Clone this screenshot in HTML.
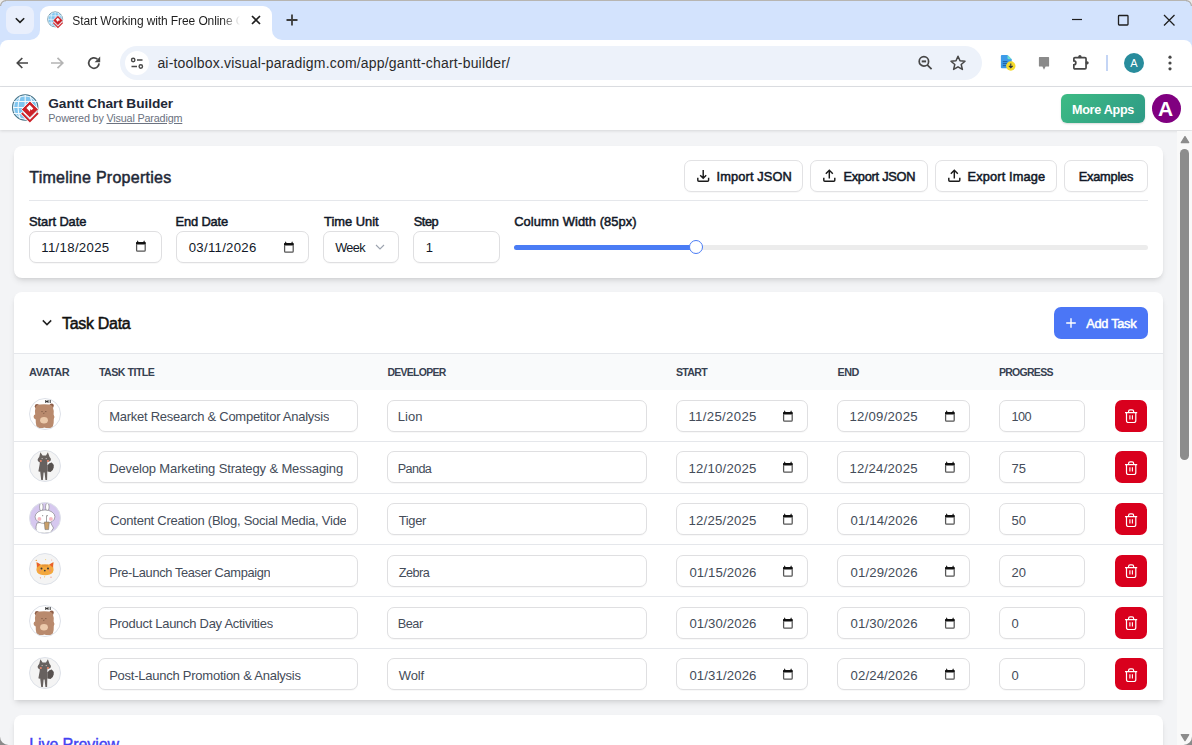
<!DOCTYPE html>
<html><head><meta charset="utf-8">
<style>
*{box-sizing:border-box;margin:0;padding:0}
html,body{width:1192px;height:745px;overflow:hidden}
body{position:relative;background:#f3f4f6;font-family:"Liberation Sans",sans-serif;color:#1f2937}
.abs{position:absolute}
svg{display:block}
/* chrome */
#tabstrip{left:0;top:0;width:1192px;height:48px;background:#d3e3fd}
#topline{left:0;top:0;width:1192px;height:1px;background:#b7b5b1}
#ddbtn{left:6px;top:6px;width:28px;height:28px;border-radius:8px;background:#e9effc}
#tab{left:40px;top:6px;width:232px;height:34px;background:#fff;border-radius:9px 9px 0 0}
.flw{width:10px;height:10px;background:#fff;top:30px}
.flb{width:20px;height:20px;background:#d3e3fd;top:20px}
#toolbar{left:0;top:40px;width:1192px;height:47px;background:#fff;border-radius:8px 8px 0 0;border-bottom:1px solid #dfe1e5}
#omni{left:120px;top:46px;width:862px;height:34px;border-radius:17px;background:#edf2fa}
#siteinfo{left:125px;top:51px;width:24px;height:24px;border-radius:12px;background:#fff}
#url{left:157px;top:54px;font-size:14px;color:#1f1f1f;white-space:nowrap;letter-spacing:0}
#tabtitle{left:72px;top:13px;font-size:11.8px;color:#1f1f1f;white-space:nowrap;width:168px;overflow:hidden;
 -webkit-mask-image:linear-gradient(90deg,#000 150px,transparent 168px)}
/* page header */
#hdr{left:0;top:87px;width:1192px;height:43px;background:#fff;box-shadow:0 1px 3px rgba(0,0,0,.12)}
#scroll{left:1177px;top:131px;width:15px;height:614px;background:#f9f9f9}
.card{background:#fff;border-radius:8px;box-shadow:0 4px 6px -1px rgba(0,0,0,.1),0 2px 4px -2px rgba(0,0,0,.1)}
.lbl{font-size:12.2px;font-weight:700;color:#111827;white-space:nowrap}
.inp{background:#fff;border:1px solid #dfdfe1;border-radius:7px;height:32px;box-shadow:0 1px 1px rgba(0,0,0,.03)}
.itxt{font-size:13px;color:#1f2937;white-space:nowrap}
.btn{background:#fff;border:1px solid #e2e2e4;border-radius:7px;height:32px;box-shadow:0 1px 1px rgba(0,0,0,.03)}
.btxt{font-size:12.2px;font-weight:700;color:#111827;white-space:nowrap}
.th{font-size:10.5px;font-weight:700;color:#374151;white-space:nowrap;top:366px}
.row{left:14px;width:1149px;height:52px;border-bottom:1px solid #e5e7eb}
.rtxt{font-size:12.6px;color:#374151;white-space:nowrap}
.del{background:#d9001d;border-radius:7px;width:32px;height:32px}
</style></head>
<body>
<!-- ================= CHROME ================= -->
<div id="tabstrip" class="abs"></div>
<div id="topline" class="abs"></div>
<div class="abs flw" style="left:30px"></div>
<div class="abs flb" style="left:20px;border-bottom-right-radius:10px"></div>
<div class="abs flw" style="left:272px"></div>
<div class="abs flb" style="left:272px;border-bottom-left-radius:10px"></div>
<div id="ddbtn" class="abs"><svg width="28" height="28"><path d="M9.8 12.2l4.2 4.2 4.2-4.2" fill="none" stroke="#1f1f1f" stroke-width="1.6"/></svg></div>
<div id="tab" class="abs"></div>

<svg class="abs" style="left:250px;top:14px" width="12" height="12"><path d="M2 2l8 8M10 2l-8 8" stroke="#1f1f1f" stroke-width="1.7"/></svg>
<svg class="abs" style="left:285px;top:13px" width="14" height="14"><path d="M7 1.5v11M1.5 7h11" stroke="#3c3c3c" stroke-width="1.8"/></svg>
<!-- window controls -->
<svg class="abs" style="left:1068px;top:12px" width="18" height="16"><path d="M4 7.5h10" stroke="#1f1f1f" stroke-width="1.2"/></svg>
<svg class="abs" style="left:1114px;top:11px" width="18" height="18"><rect x="4.5" y="4.5" width="9.5" height="9.5" rx="0.8" fill="none" stroke="#1f1f1f" stroke-width="1.3"/></svg>
<svg class="abs" style="left:1160px;top:11px" width="18" height="18"><path d="M4 4l10.5 10.5M14.5 4L4 14.5" stroke="#1f1f1f" stroke-width="1.3"/></svg>
<div id="toolbar" class="abs"></div>
<!-- nav -->
<svg class="abs" style="left:14px;top:55px" width="16" height="16"><path d="M14 8H3.5M8.3 3L3.3 8l5 5" fill="none" stroke="#474747" stroke-width="1.7"/></svg>
<svg class="abs" style="left:50px;top:55px" width="16" height="16"><path d="M1 8h11.5M7.5 2.8L12.8 8l-5.3 5.2" fill="none" stroke="#b4b4b4" stroke-width="1.7"/></svg>
<svg class="abs" style="left:86px;top:55px" width="16" height="16"><path d="M13.1 8.4A5.2 5.2 0 1 1 11.4 4.2" fill="none" stroke="#474747" stroke-width="1.7"/><path d="M14.2 1.6V7.2H8.6z" fill="#474747"/></svg>
<div id="omni" class="abs"></div>
<div id="siteinfo" class="abs"><svg width="24" height="24"><circle cx="8.2" cy="9" r="1.7" fill="none" stroke="#474747" stroke-width="1.4"/><path d="M12 9h5.5M6.5 15.5h5.5" stroke="#474747" stroke-width="1.4"/><circle cx="15.8" cy="15.5" r="1.7" fill="none" stroke="#474747" stroke-width="1.4"/></svg></div>
<svg class="abs" style="left:916px;top:54px" width="18" height="18"><circle cx="7.9" cy="7.4" r="4.7" fill="none" stroke="#474747" stroke-width="1.7"/><path d="M5.7 7.4h4.4" stroke="#474747" stroke-width="2"/><path d="M11.2 10.8l4.4 4.4" stroke="#474747" stroke-width="1.7"/></svg>
<svg class="abs" style="left:949px;top:54px" width="18" height="18"><path d="M9 2.2l2 4.6 5 .4-3.8 3.3 1.2 4.9L9 12.8l-4.4 2.6 1.2-4.9L2 7.2l5-.4z" fill="none" stroke="#474747" stroke-width="1.5" stroke-linejoin="round"/></svg>
<svg class="abs" style="left:998px;top:53px" width="20" height="20"><path d="M3.9 2H9.5L13.7 6.2V14.3Q13.7 15.3 12.7 15.3H3.9Q2.9 15.3 2.9 14.3V3Q2.9 2 3.9 2z" fill="#3d9be9"/><path d="M9.5 2L13.7 6.2H10.5Q9.5 6.2 9.5 5.2z" fill="#6ee2cf"/><path d="M4.8 8.6h4.6M4.8 10.6h4.6M4.8 12.6h3.2" stroke="#1e5a9a" stroke-width="0.9"/><circle cx="12.8" cy="13" r="4.7" fill="#f5da2c"/><path d="M12.8 10.4v4.4M10.9 12.8l1.9 2 1.9-2" fill="none" stroke="#2b3440" stroke-width="1.1"/></svg>
<svg class="abs" style="left:1035px;top:54px" width="18" height="18"><path d="M4.5 3.1H13.5Q14.1 3.1 14.1 3.7V11.9Q14.1 12.5 13.5 12.5H10.6L9 15.7 7.4 12.5H4.5Q3.9 12.5 3.9 11.9V3.7Q3.9 3.1 4.5 3.1z" fill="#8a8a8a"/></svg>
<svg class="abs" style="left:1071px;top:53px" width="20" height="20"><path d="M4 4.65H13.9Q15.05 4.65 15.05 5.8V14.7Q15.05 15.85 13.9 15.85H4Q2.85 15.85 2.85 14.7V11.8A2 2 0 0 0 2.85 7.8V5.8Q2.85 4.65 4 4.65Z" fill="none" stroke="#474747" stroke-width="1.7"/><circle cx="8.9" cy="3.6" r="1.6" fill="#474747"/><circle cx="16.1" cy="9.8" r="1.6" fill="#474747"/></svg>
<div class="abs" style="left:1106px;top:55px;width:2px;height:16px;background:#c4d5f5"></div>
<div class="abs" style="left:1124px;top:53px;width:20px;height:20px;border-radius:10px;background:#288c9c;color:#fff;font-size:11px;text-align:center;line-height:20px">A</div>
<svg class="abs" style="left:1162px;top:54px" width="16" height="18"><circle cx="8" cy="3.2" r="1.6" fill="#474747"/><circle cx="8" cy="9" r="1.6" fill="#474747"/><circle cx="8" cy="14.8" r="1.6" fill="#474747"/></svg>

<svg class="abs" style="left:45.2px;top:9px" width="20.7" height="20.7" viewBox="0 0 35 35"><circle cx="17.2" cy="17.5" r="12.7" fill="#7fc5ef" stroke="#4f7585" stroke-width="1.1"/>
<circle cx="17.2" cy="17.5" r="11.6" fill="none" stroke="#f2f9fd" stroke-width="0.9"/>
<path d="M5.5 11.5h23.4M5 17.5h24.4M5.5 23.5h23.4" stroke="#f2f9fd" stroke-width="1.1"/>
<path d="M17.2 5v25M12.3 6.2c-3 6.5-3 16 0 22.6M22.1 6.2c3 6.5 3 16 0 22.6" fill="none" stroke="#f2f9fd" stroke-width="1.1"/>
<path d="M13.2 22.4L21.9 31.1 30.6 22.4" fill="none" stroke="#fff" stroke-width="3.4"/>
<path d="M13.8 23L21.9 31.1 30 23" fill="none" stroke="#cc2229" stroke-width="1.9"/>
<path d="M21.9 11L30.3 19.4 21.9 27.8 13.5 19.4z" fill="#cc2229" stroke="#fff" stroke-width="0.9"/>
<path d="M21.7 14.8L25.3 18.4 23.5 20.2 22.3 19 22 21.8 18.4 18.1z" fill="#fff"/></svg>
<div class="abs tt" style="left:72.30px;top:15px;font-size:12.00px;line-height:12.00px;font-weight:400;color:#1f1f1f;white-space:nowrap;letter-spacing:-0.100px;width:170px;padding-bottom:4px;overflow:hidden;-webkit-mask-image:linear-gradient(90deg,#000 150px,transparent 168px)">Start Working with Free Online Gantt</div>
<div class="abs tt" style="left:157.40px;top:56px;font-size:14.00px;line-height:14.00px;font-weight:400;color:#2a2a2a;white-space:nowrap;letter-spacing:0.187px;">ai-toolbox.visual-paradigm.com/app/gantt-chart-builder/</div>
<svg class="abs" style="left:0;top:0" width="6" height="6"><path d="M0 0H6V0.8A5.2 5.2 0 0 0 0.8 6H0z" fill="#ebebeb"/><path d="M6 0.6A5.4 5.4 0 0 0 0.6 6" fill="none" stroke="#a9a7a3" stroke-width="1.1"/></svg>
<svg class="abs" style="left:1186px;top:0" width="6" height="6"><path d="M6 0H0V0.8A5.2 5.2 0 0 1 5.2 6H6z" fill="#ebebeb"/><path d="M0 0.6A5.4 5.4 0 0 1 5.4 6" fill="none" stroke="#a9a7a3" stroke-width="1.1"/></svg>
<div id="hdr" class="abs"></div>
<svg class="abs" style="left:8px;top:90px" width="35" height="35" viewBox="0 0 35 35"><circle cx="17.2" cy="17.5" r="12.7" fill="#7fc5ef" stroke="#4f7585" stroke-width="1.1"/>
<circle cx="17.2" cy="17.5" r="11.6" fill="none" stroke="#f2f9fd" stroke-width="0.9"/>
<path d="M5.5 11.5h23.4M5 17.5h24.4M5.5 23.5h23.4" stroke="#f2f9fd" stroke-width="1.1"/>
<path d="M17.2 5v25M12.3 6.2c-3 6.5-3 16 0 22.6M22.1 6.2c3 6.5 3 16 0 22.6" fill="none" stroke="#f2f9fd" stroke-width="1.1"/>
<path d="M13.2 22.4L21.9 31.1 30.6 22.4" fill="none" stroke="#fff" stroke-width="3.4"/>
<path d="M13.8 23L21.9 31.1 30 23" fill="none" stroke="#cc2229" stroke-width="1.9"/>
<path d="M21.9 11L30.3 19.4 21.9 27.8 13.5 19.4z" fill="#cc2229" stroke="#fff" stroke-width="0.9"/>
<path d="M21.7 14.8L25.3 18.4 23.5 20.2 22.3 19 22 21.8 18.4 18.1z" fill="#fff"/></svg>
<div class="abs tt" style="left:48.30px;top:97px;font-size:13.70px;line-height:13.70px;font-weight:700;color:#1f2937;white-space:nowrap;letter-spacing:-0.084px;">Gantt Chart Builder</div>
<div class="abs tt" style="left:48.30px;top:113px;font-size:10.80px;line-height:10.80px;font-weight:400;color:#6b7280;white-space:nowrap;letter-spacing:-0.170px;">Powered by <span style="text-decoration:underline">Visual Paradigm</span></div>
<div class="abs" style="left:1061px;top:94px;width:84px;height:29px;border-radius:6px;background:linear-gradient(135deg,#3dbb84,#2e9a86);box-shadow:0 1px 2px rgba(0,0,0,.15)"></div>
<div class="abs tt" style="left:1072.00px;top:104px;font-size:12.60px;line-height:12.60px;font-weight:700;color:#fff;white-space:nowrap;letter-spacing:-0.283px;">More Apps</div>
<div class="abs" style="left:1152px;top:94px;width:29px;height:29px;border-radius:50%;background:#800080"></div>
<div class="abs tt" style="left:1158.00px;top:98px;font-size:21.00px;line-height:21.00px;font-weight:700;color:#fff;white-space:nowrap;">A</div>
<div id="scroll" class="abs"></div>
<svg class="abs" style="left:1177px;top:131px" width="15" height="614">
 <path d="M4.3 11.6h7.4l-3.7-6z" fill="#8c8c8c" stroke="#8c8c8c" stroke-width="1.3" stroke-linejoin="round"/>
 <rect x="3" y="18" width="9" height="311" rx="4.5" fill="#8c8c8c"/>
 <path d="M4.3 603.6h7.4l-3.7 6z" fill="#8c8c8c" stroke="#8c8c8c" stroke-width="1.3" stroke-linejoin="round"/>
</svg>
<div class="abs card" style="left:14px;top:146px;width:1149px;height:132px"></div>
<div class="abs tt" style="left:29.20px;top:170px;font-size:16.00px;line-height:16.00px;font-weight:400;-webkit-text-stroke:0.5px #1f2937;color:#1f2937;white-space:nowrap;letter-spacing:0.265px;">Timeline Properties</div>
<div class="abs" style="left:29px;top:200px;width:1119px;height:1px;background:#e5e7eb"></div>
<div class="abs btn" style="left:684px;top:160px;width:119px"></div>
<svg class="abs" style="left:696px;top:169px" width="14" height="14"><path d="M7.2 1.1V9.3M4.2 6.2L7.2 9.2 10.2 6.2M1.8 8.8V11.2Q1.8 12.2 2.8 12.2H11.6Q12.6 12.2 12.6 11.2V8.8" fill="none" stroke="#1a1a1a" stroke-width="1.45"/></svg>
<div class="abs tt" style="left:716.60px;top:171px;font-size:12.80px;line-height:12.80px;font-weight:400;-webkit-text-stroke:0.5px #111827;color:#111827;white-space:nowrap;letter-spacing:0.129px;">Import JSON</div>
<div class="abs btn" style="left:810px;top:160px;width:118px"></div>
<svg class="abs" style="left:822px;top:169px" width="14" height="14"><path d="M7.3 9.6V1.5M3.8 4.8L7.3 1.3 10.8 4.8M1.8 8.8V11.2Q1.8 12.2 2.8 12.2H11.8Q12.8 12.2 12.8 11.2V8.8" fill="none" stroke="#1a1a1a" stroke-width="1.45"/></svg>
<div class="abs tt" style="left:843.40px;top:171px;font-size:12.80px;line-height:12.80px;font-weight:400;-webkit-text-stroke:0.5px #111827;color:#111827;white-space:nowrap;letter-spacing:-0.253px;">Export JSON</div>
<div class="abs btn" style="left:935px;top:160px;width:122px"></div>
<svg class="abs" style="left:947px;top:169px" width="14" height="14"><path d="M7.3 9.6V1.5M3.8 4.8L7.3 1.3 10.8 4.8M1.8 8.8V11.2Q1.8 12.2 2.8 12.2H11.8Q12.8 12.2 12.8 11.2V8.8" fill="none" stroke="#1a1a1a" stroke-width="1.45"/></svg>
<div class="abs tt" style="left:967.60px;top:171px;font-size:12.80px;line-height:12.80px;font-weight:400;-webkit-text-stroke:0.5px #111827;color:#111827;white-space:nowrap;letter-spacing:0.128px;">Export Image</div>
<div class="abs btn" style="left:1064px;top:160px;width:84px"></div>
<div class="abs tt" style="left:1078.70px;top:171px;font-size:12.80px;line-height:12.80px;font-weight:400;-webkit-text-stroke:0.5px #111827;color:#111827;white-space:nowrap;letter-spacing:-0.227px;">Examples</div>
<div class="abs tt" style="left:29.10px;top:216px;font-size:12.90px;line-height:12.90px;font-weight:400;-webkit-text-stroke:0.5px #111827;color:#111827;white-space:nowrap;letter-spacing:-0.085px;">Start Date</div>
<div class="abs tt" style="left:175.60px;top:216px;font-size:12.90px;line-height:12.90px;font-weight:400;-webkit-text-stroke:0.5px #111827;color:#111827;white-space:nowrap;letter-spacing:-0.168px;">End Date</div>
<div class="abs tt" style="left:324.00px;top:216px;font-size:12.90px;line-height:12.90px;font-weight:400;-webkit-text-stroke:0.5px #111827;color:#111827;white-space:nowrap;letter-spacing:-0.011px;">Time Unit</div>
<div class="abs tt" style="left:413.70px;top:216px;font-size:12.77px;line-height:12.77px;font-weight:400;-webkit-text-stroke:0.5px #111827;color:#111827;white-space:nowrap;letter-spacing:-0.430px;">Step</div>
<div class="abs tt" style="left:514.20px;top:216px;font-size:12.90px;line-height:12.90px;font-weight:400;-webkit-text-stroke:0.5px #111827;color:#111827;white-space:nowrap;letter-spacing:0.073px;">Column Width (85px)</div>
<div class="abs inp" style="left:29px;top:231px;width:133px"></div>
<div class="abs tt" style="left:41.30px;top:241px;font-size:13.20px;line-height:13.20px;font-weight:400;color:#111827;white-space:nowrap;letter-spacing:0.312px;">11/18/2025</div>
<div class="abs" style="left:135.2px;top:240.4px"><svg width="12" height="12"><path d="M1.6 4.5V10.2Q1.6 11.1 2.5 11.1H9.3Q10.2 11.1 10.2 10.2V4.5" fill="none" stroke="#555" stroke-width="1.25"/><path d="M1 4.6V2.6Q1 1.9 1.7 1.9H1.9L2.7 0.3 3.5 1.9H8.3L9.1 0.3 9.9 1.9H10.1Q10.8 1.9 10.8 2.6V4.6z" fill="#111"/></svg></div>
<div class="abs inp" style="left:176px;top:231px;width:133px"></div>
<div class="abs tt" style="left:188.70px;top:241px;font-size:13.20px;line-height:13.20px;font-weight:400;color:#111827;white-space:nowrap;letter-spacing:0.290px;">03/11/2026</div>
<div class="abs" style="left:283px;top:240.6px"><svg width="12" height="12"><path d="M1.6 4.5V10.2Q1.6 11.1 2.5 11.1H9.3Q10.2 11.1 10.2 10.2V4.5" fill="none" stroke="#555" stroke-width="1.25"/><path d="M1 4.6V2.6Q1 1.9 1.7 1.9H1.9L2.7 0.3 3.5 1.9H8.3L9.1 0.3 9.9 1.9H10.1Q10.8 1.9 10.8 2.6V4.6z" fill="#111"/></svg></div>
<div class="abs inp" style="left:323px;top:231px;width:76px"></div>
<div class="abs tt" style="left:335.20px;top:242px;font-size:12.72px;line-height:12.72px;font-weight:400;color:#111827;white-space:nowrap;letter-spacing:-0.661px;">Week</div>
<svg class="abs" style="left:375px;top:243px" width="10" height="8"><path d="M1 2l4 4 4-4" fill="none" stroke="#9ca3af" stroke-width="1.1"/></svg>
<div class="abs inp" style="left:413px;top:231px;width:87px"></div>
<div class="abs tt" style="left:425.80px;top:241px;font-size:13.00px;line-height:13.00px;font-weight:400;color:#111827;white-space:nowrap;">1</div>
<div class="abs" style="left:514px;top:245px;width:634px;height:5px;border-radius:3px;background:#ececec"></div>
<div class="abs" style="left:514px;top:245px;width:182px;height:5px;border-radius:3px;background:#4a7cf5"></div>
<div class="abs" style="left:688.7px;top:240.4px;width:14px;height:14px;border-radius:50%;background:#fff;border:1.5px solid #4a7cf5"></div>
<div class="abs card" style="left:14px;top:292px;width:1149px;height:408px;border-radius:8px 8px 0 0"></div>
<svg class="abs" style="left:40px;top:317px" width="14" height="12"><path d="M2.8 3.4l4.2 4.2 4.2-4.2" fill="none" stroke="#222" stroke-width="1.5"/></svg>
<div class="abs tt" style="left:62.00px;top:316px;font-size:16.00px;line-height:16.00px;font-weight:400;-webkit-text-stroke:0.5px #111111;color:#111111;white-space:nowrap;letter-spacing:-0.305px;">Task Data</div>
<div class="abs" style="left:1054px;top:307px;width:94px;height:32px;border-radius:7px;background:#4b76f6"></div>
<svg class="abs" style="left:1064px;top:316px" width="14" height="14"><path d="M7 2.2v9.6M2.2 7h9.6" stroke="#fff" stroke-width="1.4"/></svg>
<div class="abs tt" style="left:1086.30px;top:318px;font-size:12.80px;line-height:12.80px;font-weight:400;-webkit-text-stroke:0.5px #fff;color:#fff;white-space:nowrap;letter-spacing:-0.305px;">Add Task</div>
<div class="abs" style="left:14px;top:353px;width:1149px;height:37px;background:#f9fafb;border-top:1px solid #e5e7eb"></div>
<div class="abs tt" style="left:29.10px;top:367px;font-size:10.96px;line-height:10.96px;font-weight:700;color:#374151;white-space:nowrap;letter-spacing:-0.371px;">AVATAR</div>
<div class="abs tt" style="left:98.90px;top:367px;font-size:10.61px;line-height:10.61px;font-weight:700;color:#374151;white-space:nowrap;letter-spacing:-0.497px;">TASK TITLE</div>
<div class="abs tt" style="left:387.50px;top:368px;font-size:10.45px;line-height:10.45px;font-weight:700;color:#374151;white-space:nowrap;letter-spacing:-0.711px;">DEVELOPER</div>
<div class="abs tt" style="left:675.90px;top:367px;font-size:10.58px;line-height:10.58px;font-weight:700;color:#374151;white-space:nowrap;letter-spacing:-0.664px;">START</div>
<div class="abs tt" style="left:837.60px;top:367px;font-size:10.84px;line-height:10.84px;font-weight:700;color:#374151;white-space:nowrap;letter-spacing:-0.620px;">END</div>
<div class="abs tt" style="left:998.90px;top:367px;font-size:10.50px;line-height:10.50px;font-weight:700;color:#374151;white-space:nowrap;letter-spacing:-0.710px;">PROGRESS</div>
<div class="abs" style="left:14px;top:440.75px;width:1149px;height:1px;background:#e5e7eb"></div>
<svg class="abs" style="left:29.10px;top:398.00px" width="32" height="32" viewBox="0 0 32 32"><defs><clipPath id="cpbear414"><circle cx="16" cy="16" r="15.5"/></clipPath></defs><circle cx="16" cy="16" r="15.5" fill="#fff"/><g clip-path="url(#cpbear414)"><circle cx="8" cy="8.2" r="2.2" fill="#8e5e48"/><circle cx="22.6" cy="7.8" r="2.2" fill="#8e5e48"/>
<path d="M6.5 9.5Q7.5 6.5 11 6.6Q15 6 19.5 6.6Q23.5 6.8 24 10Q25.3 13 24.6 16.5Q26 18.5 24.8 21Q25 26 23.8 28.5Q22.5 30.4 20 30H17Q15.4 29.2 13.8 30H10Q8 30 7.4 28Q6.6 25 6.7 21.5Q4.3 20.6 4.6 18.6Q4.8 16.8 6.2 16.6Q5.5 13 6.5 9.5z" fill="#b98a6d"/>
<ellipse cx="15" cy="22.3" rx="3.9" ry="3.2" fill="#eccaab"/>
<path d="M12.4 13.6h1.2M16.2 13.6h1.2M14.2 15.2q.6.5 1.2 0" stroke="#6b4a3a" stroke-width=".8" fill="none"/>
<path d="M16.8 2v3M19 2v3M16.8 3.5h2.2M21.2 2v3" stroke="#333" stroke-width="1"/></g><circle cx="16" cy="16" r="15.5" fill="none" stroke="#dde1e8" stroke-width="1"/></svg>
<div class="abs inp" style="left:98px;top:399.50px;width:260px;overflow:hidden"></div>
<div class="abs tt" style="left:109.20px;top:410px;font-size:12.99px;line-height:12.99px;font-weight:400;color:#444c59;white-space:nowrap;letter-spacing:-0.258px;max-width:236px;padding-bottom:4px;overflow:hidden">Market Research &amp; Competitor Analysis</div>
<div class="abs inp" style="left:387px;top:399.50px;width:260px"></div>
<div class="abs tt" style="left:397.80px;top:410px;font-size:13.00px;line-height:13.00px;font-weight:400;color:#444c59;white-space:nowrap;letter-spacing:0.017px;">Lion</div>
<div class="abs inp" style="left:676px;top:399.50px;width:132px"></div>
<div class="abs tt" style="left:688.40px;top:410px;font-size:13.20px;line-height:13.20px;font-weight:400;color:#444c59;white-space:nowrap;letter-spacing:0.335px;">11/25/2025</div>
<div class="abs" style="left:782.2px;top:409.70px"><svg width="12" height="12"><path d="M1.6 4.5V10.2Q1.6 11.1 2.5 11.1H9.3Q10.2 11.1 10.2 10.2V4.5" fill="none" stroke="#555" stroke-width="1.25"/><path d="M1 4.6V2.6Q1 1.9 1.7 1.9H1.9L2.7 0.3 3.5 1.9H8.3L9.1 0.3 9.9 1.9H10.1Q10.8 1.9 10.8 2.6V4.6z" fill="#111"/></svg></div>
<div class="abs inp" style="left:837px;top:399.50px;width:133px"></div>
<div class="abs tt" style="left:849.50px;top:410px;font-size:13.20px;line-height:13.20px;font-weight:400;color:#444c59;white-space:nowrap;letter-spacing:0.226px;">12/09/2025</div>
<div class="abs" style="left:943.7px;top:409.70px"><svg width="12" height="12"><path d="M1.6 4.5V10.2Q1.6 11.1 2.5 11.1H9.3Q10.2 11.1 10.2 10.2V4.5" fill="none" stroke="#555" stroke-width="1.25"/><path d="M1 4.6V2.6Q1 1.9 1.7 1.9H1.9L2.7 0.3 3.5 1.9H8.3L9.1 0.3 9.9 1.9H10.1Q10.8 1.9 10.8 2.6V4.6z" fill="#111"/></svg></div>
<div class="abs inp" style="left:999px;top:399.50px;width:86px"></div>
<div class="abs tt" style="left:1011.60px;top:411px;font-size:12.71px;line-height:12.71px;font-weight:400;color:#444c59;white-space:nowrap;letter-spacing:-0.643px;">100</div>
<div class="abs del" style="left:1115px;top:399.50px"></div>
<div class="abs" style="left:1124px;top:408.00px"><svg width="15" height="16"><path d="M4.6 4.5V3.3Q4.6 1.8 6.1 1.8H8.1Q9.6 1.8 9.6 3.3V4.5M1 4.6H13.2M2.5 4.6V12.4Q2.5 14.5 4.6 14.5H9.7Q11.8 14.5 11.8 12.4V4.6" fill="none" stroke="#fff" stroke-width="1.2"/><path d="M5.9 7.2v4.3M8.4 7.2v4.3" stroke="#fff" stroke-width="1.1"/></svg></div>
<div class="abs" style="left:14px;top:492.50px;width:1149px;height:1px;background:#e5e7eb"></div>
<svg class="abs" style="left:29.10px;top:449.75px" width="32" height="32" viewBox="0 0 32 32"><defs><clipPath id="cpwolf465"><circle cx="16" cy="16" r="15.5"/></clipPath></defs><circle cx="16" cy="16" r="15.5" fill="#f4f4f4"/><g clip-path="url(#cpwolf465)"><path d="M18.3 15.5Q20.5 12.3 22.8 12.5Q25.1 14 24.7 17.5Q24.2 20.8 21.5 22L18.3 21.5z" fill="#57514f"/>
<path d="M10.2 7L11.4 2.3 13.6 5.5H17L18.9 2.3 20.6 7Q22.3 8.6 21.9 10.2Q20.8 11.8 18.3 12.2V21.5L18.1 30H16.4L15.6 22.5H14.6L13.9 30H12.2L11.2 21.5 10.4 21.8 9.4 21.3 10.7 14V12.2Q8.4 11.6 8.6 9.8Q9 8.2 10.2 7z" fill="#67615f"/>
<circle cx="11.8" cy="11" r="1.1" fill="#e8876b"/><circle cx="18.9" cy="11" r="1.1" fill="#e8876b"/>
<path d="M12.5 8.6h1.4M16.6 8.6h1.4" stroke="#d9d4d2" stroke-width=".7"/></g><circle cx="16" cy="16" r="15.5" fill="none" stroke="#dde1e8" stroke-width="1"/></svg>
<div class="abs inp" style="left:98px;top:451.25px;width:260px;overflow:hidden"></div>
<div class="abs tt" style="left:109.20px;top:462px;font-size:13.00px;line-height:13.00px;font-weight:400;color:#444c59;white-space:nowrap;letter-spacing:-0.142px;max-width:236px;padding-bottom:4px;overflow:hidden">Develop Marketing Strategy &amp; Messaging</div>
<div class="abs inp" style="left:387px;top:451.25px;width:260px"></div>
<div class="abs tt" style="left:397.83px;top:463px;font-size:12.62px;line-height:12.62px;font-weight:400;color:#444c59;white-space:nowrap;letter-spacing:-0.617px;">Panda</div>
<div class="abs inp" style="left:676px;top:451.25px;width:132px"></div>
<div class="abs tt" style="left:688.40px;top:462px;font-size:13.20px;line-height:13.20px;font-weight:400;color:#444c59;white-space:nowrap;letter-spacing:0.226px;">12/10/2025</div>
<div class="abs" style="left:782.2px;top:461.45px"><svg width="12" height="12"><path d="M1.6 4.5V10.2Q1.6 11.1 2.5 11.1H9.3Q10.2 11.1 10.2 10.2V4.5" fill="none" stroke="#555" stroke-width="1.25"/><path d="M1 4.6V2.6Q1 1.9 1.7 1.9H1.9L2.7 0.3 3.5 1.9H8.3L9.1 0.3 9.9 1.9H10.1Q10.8 1.9 10.8 2.6V4.6z" fill="#111"/></svg></div>
<div class="abs inp" style="left:837px;top:451.25px;width:133px"></div>
<div class="abs tt" style="left:849.50px;top:462px;font-size:13.20px;line-height:13.20px;font-weight:400;color:#444c59;white-space:nowrap;letter-spacing:0.226px;">12/24/2025</div>
<div class="abs" style="left:943.7px;top:461.45px"><svg width="12" height="12"><path d="M1.6 4.5V10.2Q1.6 11.1 2.5 11.1H9.3Q10.2 11.1 10.2 10.2V4.5" fill="none" stroke="#555" stroke-width="1.25"/><path d="M1 4.6V2.6Q1 1.9 1.7 1.9H1.9L2.7 0.3 3.5 1.9H8.3L9.1 0.3 9.9 1.9H10.1Q10.8 1.9 10.8 2.6V4.6z" fill="#111"/></svg></div>
<div class="abs inp" style="left:999px;top:451.25px;width:86px"></div>
<div class="abs tt" style="left:1011.60px;top:462px;font-size:13.00px;line-height:13.00px;font-weight:400;color:#444c59;white-space:nowrap;">75</div>
<div class="abs del" style="left:1115px;top:451.25px"></div>
<div class="abs" style="left:1124px;top:459.75px"><svg width="15" height="16"><path d="M4.6 4.5V3.3Q4.6 1.8 6.1 1.8H8.1Q9.6 1.8 9.6 3.3V4.5M1 4.6H13.2M2.5 4.6V12.4Q2.5 14.5 4.6 14.5H9.7Q11.8 14.5 11.8 12.4V4.6" fill="none" stroke="#fff" stroke-width="1.2"/><path d="M5.9 7.2v4.3M8.4 7.2v4.3" stroke="#fff" stroke-width="1.1"/></svg></div>
<div class="abs" style="left:14px;top:544.25px;width:1149px;height:1px;background:#e5e7eb"></div>
<svg class="abs" style="left:29.10px;top:501.50px" width="32" height="32" viewBox="0 0 32 32"><defs><clipPath id="cprabbit517"><circle cx="16" cy="16" r="15.5"/></clipPath></defs><circle cx="16" cy="16" r="15.5" fill="#d6c8ef"/><g clip-path="url(#cprabbit517)"><ellipse cx="12.3" cy="5" rx="1.8" ry="3.9" fill="#fff" stroke="#666" stroke-width=".5"/><ellipse cx="18.3" cy="5" rx="1.8" ry="3.9" fill="#fff" stroke="#666" stroke-width=".5"/>
<path d="M8 21Q5.5 28 9 30.5Q15 32 21.5 30.5L24.5 26Q22 22 21 19z" fill="#fff" stroke="#666" stroke-width=".5"/>
<ellipse cx="16" cy="14.8" rx="9.9" ry="6.8" fill="#fff" stroke="#666" stroke-width=".5"/>
<circle cx="10.4" cy="16.9" r="1.9" fill="#f7b8c0"/><circle cx="21.9" cy="16.9" r="1.9" fill="#f7b8c0"/>
<path d="M13 13.7h1.2M17.8 13.7h1.2" stroke="#777" stroke-width=".8"/>
<path d="M15.3 20H20.3L19.6 27.6H16z" fill="#c9a06a" stroke="#666" stroke-width=".5"/><path d="M17.5 13.5V20" stroke="#666" stroke-width=".6"/></g><circle cx="16" cy="16" r="15.5" fill="none" stroke="#dde1e8" stroke-width="1"/></svg>
<div class="abs inp" style="left:98px;top:503.00px;width:260px;overflow:hidden"></div>
<div class="abs tt" style="left:110.20px;top:514px;font-size:13.00px;line-height:13.00px;font-weight:400;color:#444c59;white-space:nowrap;letter-spacing:-0.250px;max-width:236px;padding-bottom:4px;overflow:hidden">Content Creation (Blog, Social Media, Videos)</div>
<div class="abs inp" style="left:387px;top:503.00px;width:260px"></div>
<div class="abs tt" style="left:398.80px;top:515px;font-size:12.91px;line-height:12.91px;font-weight:400;color:#444c59;white-space:nowrap;letter-spacing:-0.348px;">Tiger</div>
<div class="abs inp" style="left:676px;top:503.00px;width:132px"></div>
<div class="abs tt" style="left:688.40px;top:514px;font-size:13.20px;line-height:13.20px;font-weight:400;color:#444c59;white-space:nowrap;letter-spacing:0.226px;">12/25/2025</div>
<div class="abs" style="left:782.2px;top:513.20px"><svg width="12" height="12"><path d="M1.6 4.5V10.2Q1.6 11.1 2.5 11.1H9.3Q10.2 11.1 10.2 10.2V4.5" fill="none" stroke="#555" stroke-width="1.25"/><path d="M1 4.6V2.6Q1 1.9 1.7 1.9H1.9L2.7 0.3 3.5 1.9H8.3L9.1 0.3 9.9 1.9H10.1Q10.8 1.9 10.8 2.6V4.6z" fill="#111"/></svg></div>
<div class="abs inp" style="left:837px;top:503.00px;width:133px"></div>
<div class="abs tt" style="left:850.50px;top:514px;font-size:13.20px;line-height:13.20px;font-weight:400;color:#444c59;white-space:nowrap;letter-spacing:0.115px;">01/14/2026</div>
<div class="abs" style="left:943.7px;top:513.20px"><svg width="12" height="12"><path d="M1.6 4.5V10.2Q1.6 11.1 2.5 11.1H9.3Q10.2 11.1 10.2 10.2V4.5" fill="none" stroke="#555" stroke-width="1.25"/><path d="M1 4.6V2.6Q1 1.9 1.7 1.9H1.9L2.7 0.3 3.5 1.9H8.3L9.1 0.3 9.9 1.9H10.1Q10.8 1.9 10.8 2.6V4.6z" fill="#111"/></svg></div>
<div class="abs inp" style="left:999px;top:503.00px;width:86px"></div>
<div class="abs tt" style="left:1011.60px;top:514px;font-size:13.00px;line-height:13.00px;font-weight:400;color:#444c59;white-space:nowrap;">50</div>
<div class="abs del" style="left:1115px;top:503.00px"></div>
<div class="abs" style="left:1124px;top:511.50px"><svg width="15" height="16"><path d="M4.6 4.5V3.3Q4.6 1.8 6.1 1.8H8.1Q9.6 1.8 9.6 3.3V4.5M1 4.6H13.2M2.5 4.6V12.4Q2.5 14.5 4.6 14.5H9.7Q11.8 14.5 11.8 12.4V4.6" fill="none" stroke="#fff" stroke-width="1.2"/><path d="M5.9 7.2v4.3M8.4 7.2v4.3" stroke="#fff" stroke-width="1.1"/></svg></div>
<div class="abs" style="left:14px;top:596.00px;width:1149px;height:1px;background:#e5e7eb"></div>
<svg class="abs" style="left:29.10px;top:553.25px" width="32" height="32" viewBox="0 0 32 32"><defs><clipPath id="cpcat569"><circle cx="16" cy="16" r="15.5"/></clipPath></defs><circle cx="16" cy="16" r="15.5" fill="#f4f4f4"/><g clip-path="url(#cpcat569)"><path d="M7.6 9.2L11.6 11.4H20.4L24.4 9.2 24.2 14Q25.2 17 23.8 19.6Q21.5 22.2 16 22.2Q10.5 22.2 8.2 19.6Q6.8 17 7.8 14z" fill="#f3a83e"/>
<path d="M7.6 9.2L11.6 11.4 8.3 14.4zM24.4 9.2L20.4 11.4 23.7 14.4z" fill="#e9612b"/>
<path d="M14 11.5v2M16 11.3v2.4M18 11.5v2" stroke="#d9802a" stroke-width=".9"/>
<circle cx="12.5" cy="15.4" r="1" fill="#3a3a3a"/><circle cx="19" cy="15.4" r="1" fill="#3a3a3a"/><circle cx="15.8" cy="17.6" r=".9" fill="#3a3a3a"/>
<circle cx="10.8" cy="17.4" r="1" fill="#f08a7a"/><circle cx="21" cy="17.4" r="1" fill="#f08a7a"/>
<circle cx="7.3" cy="7.4" r=".7" fill="#f2a23a"/><circle cx="16.6" cy="6.6" r=".6" fill="#f3cf7a"/><circle cx="22.6" cy="7" r=".6" fill="#f5b3a0"/><circle cx="11.4" cy="24.8" r=".6" fill="#f08a7a"/><circle cx="15.6" cy="23.8" r=".6" fill="#f2c04a"/><circle cx="22" cy="24.2" r=".6" fill="#f08a7a"/></g><circle cx="16" cy="16" r="15.5" fill="none" stroke="#dde1e8" stroke-width="1"/></svg>
<div class="abs inp" style="left:98px;top:554.75px;width:260px;overflow:hidden"></div>
<div class="abs tt" style="left:109.21px;top:567px;font-size:12.84px;line-height:12.84px;font-weight:400;color:#444c59;white-space:nowrap;letter-spacing:-0.351px;max-width:236px;padding-bottom:4px;overflow:hidden">Pre-Launch Teaser Campaign</div>
<div class="abs inp" style="left:387px;top:554.75px;width:260px"></div>
<div class="abs tt" style="left:398.80px;top:567px;font-size:12.70px;line-height:12.70px;font-weight:400;color:#444c59;white-space:nowrap;letter-spacing:-0.529px;">Zebra</div>
<div class="abs inp" style="left:676px;top:554.75px;width:132px"></div>
<div class="abs tt" style="left:689.40px;top:566px;font-size:13.20px;line-height:13.20px;font-weight:400;color:#444c59;white-space:nowrap;letter-spacing:0.115px;">01/15/2026</div>
<div class="abs" style="left:782.2px;top:564.95px"><svg width="12" height="12"><path d="M1.6 4.5V10.2Q1.6 11.1 2.5 11.1H9.3Q10.2 11.1 10.2 10.2V4.5" fill="none" stroke="#555" stroke-width="1.25"/><path d="M1 4.6V2.6Q1 1.9 1.7 1.9H1.9L2.7 0.3 3.5 1.9H8.3L9.1 0.3 9.9 1.9H10.1Q10.8 1.9 10.8 2.6V4.6z" fill="#111"/></svg></div>
<div class="abs inp" style="left:837px;top:554.75px;width:133px"></div>
<div class="abs tt" style="left:850.50px;top:566px;font-size:13.20px;line-height:13.20px;font-weight:400;color:#444c59;white-space:nowrap;letter-spacing:0.115px;">01/29/2026</div>
<div class="abs" style="left:943.7px;top:564.95px"><svg width="12" height="12"><path d="M1.6 4.5V10.2Q1.6 11.1 2.5 11.1H9.3Q10.2 11.1 10.2 10.2V4.5" fill="none" stroke="#555" stroke-width="1.25"/><path d="M1 4.6V2.6Q1 1.9 1.7 1.9H1.9L2.7 0.3 3.5 1.9H8.3L9.1 0.3 9.9 1.9H10.1Q10.8 1.9 10.8 2.6V4.6z" fill="#111"/></svg></div>
<div class="abs inp" style="left:999px;top:554.75px;width:86px"></div>
<div class="abs tt" style="left:1011.60px;top:566px;font-size:13.00px;line-height:13.00px;font-weight:400;color:#444c59;white-space:nowrap;">20</div>
<div class="abs del" style="left:1115px;top:554.75px"></div>
<div class="abs" style="left:1124px;top:563.25px"><svg width="15" height="16"><path d="M4.6 4.5V3.3Q4.6 1.8 6.1 1.8H8.1Q9.6 1.8 9.6 3.3V4.5M1 4.6H13.2M2.5 4.6V12.4Q2.5 14.5 4.6 14.5H9.7Q11.8 14.5 11.8 12.4V4.6" fill="none" stroke="#fff" stroke-width="1.2"/><path d="M5.9 7.2v4.3M8.4 7.2v4.3" stroke="#fff" stroke-width="1.1"/></svg></div>
<div class="abs" style="left:14px;top:647.75px;width:1149px;height:1px;background:#e5e7eb"></div>
<svg class="abs" style="left:29.10px;top:605.00px" width="32" height="32" viewBox="0 0 32 32"><defs><clipPath id="cpbear621"><circle cx="16" cy="16" r="15.5"/></clipPath></defs><circle cx="16" cy="16" r="15.5" fill="#fff"/><g clip-path="url(#cpbear621)"><circle cx="8" cy="8.2" r="2.2" fill="#8e5e48"/><circle cx="22.6" cy="7.8" r="2.2" fill="#8e5e48"/>
<path d="M6.5 9.5Q7.5 6.5 11 6.6Q15 6 19.5 6.6Q23.5 6.8 24 10Q25.3 13 24.6 16.5Q26 18.5 24.8 21Q25 26 23.8 28.5Q22.5 30.4 20 30H17Q15.4 29.2 13.8 30H10Q8 30 7.4 28Q6.6 25 6.7 21.5Q4.3 20.6 4.6 18.6Q4.8 16.8 6.2 16.6Q5.5 13 6.5 9.5z" fill="#b98a6d"/>
<ellipse cx="15" cy="22.3" rx="3.9" ry="3.2" fill="#eccaab"/>
<path d="M12.4 13.6h1.2M16.2 13.6h1.2M14.2 15.2q.6.5 1.2 0" stroke="#6b4a3a" stroke-width=".8" fill="none"/>
<path d="M16.8 2v3M19 2v3M16.8 3.5h2.2M21.2 2v3" stroke="#333" stroke-width="1"/></g><circle cx="16" cy="16" r="15.5" fill="none" stroke="#dde1e8" stroke-width="1"/></svg>
<div class="abs inp" style="left:98px;top:606.50px;width:260px;overflow:hidden"></div>
<div class="abs tt" style="left:109.20px;top:618px;font-size:12.96px;line-height:12.96px;font-weight:400;color:#444c59;white-space:nowrap;letter-spacing:-0.265px;max-width:236px;padding-bottom:4px;overflow:hidden">Product Launch Day Activities</div>
<div class="abs inp" style="left:387px;top:606.50px;width:260px"></div>
<div class="abs tt" style="left:397.82px;top:618px;font-size:12.74px;line-height:12.74px;font-weight:400;color:#444c59;white-space:nowrap;letter-spacing:-0.527px;">Bear</div>
<div class="abs inp" style="left:676px;top:606.50px;width:132px"></div>
<div class="abs tt" style="left:689.40px;top:617px;font-size:13.20px;line-height:13.20px;font-weight:400;color:#444c59;white-space:nowrap;letter-spacing:0.115px;">01/30/2026</div>
<div class="abs" style="left:782.2px;top:616.70px"><svg width="12" height="12"><path d="M1.6 4.5V10.2Q1.6 11.1 2.5 11.1H9.3Q10.2 11.1 10.2 10.2V4.5" fill="none" stroke="#555" stroke-width="1.25"/><path d="M1 4.6V2.6Q1 1.9 1.7 1.9H1.9L2.7 0.3 3.5 1.9H8.3L9.1 0.3 9.9 1.9H10.1Q10.8 1.9 10.8 2.6V4.6z" fill="#111"/></svg></div>
<div class="abs inp" style="left:837px;top:606.50px;width:133px"></div>
<div class="abs tt" style="left:850.50px;top:617px;font-size:13.20px;line-height:13.20px;font-weight:400;color:#444c59;white-space:nowrap;letter-spacing:0.115px;">01/30/2026</div>
<div class="abs" style="left:943.7px;top:616.70px"><svg width="12" height="12"><path d="M1.6 4.5V10.2Q1.6 11.1 2.5 11.1H9.3Q10.2 11.1 10.2 10.2V4.5" fill="none" stroke="#555" stroke-width="1.25"/><path d="M1 4.6V2.6Q1 1.9 1.7 1.9H1.9L2.7 0.3 3.5 1.9H8.3L9.1 0.3 9.9 1.9H10.1Q10.8 1.9 10.8 2.6V4.6z" fill="#111"/></svg></div>
<div class="abs inp" style="left:999px;top:606.50px;width:86px"></div>
<div class="abs tt" style="left:1011.60px;top:617px;font-size:13.00px;line-height:13.00px;font-weight:400;color:#444c59;white-space:nowrap;">0</div>
<div class="abs del" style="left:1115px;top:606.50px"></div>
<div class="abs" style="left:1124px;top:615.00px"><svg width="15" height="16"><path d="M4.6 4.5V3.3Q4.6 1.8 6.1 1.8H8.1Q9.6 1.8 9.6 3.3V4.5M1 4.6H13.2M2.5 4.6V12.4Q2.5 14.5 4.6 14.5H9.7Q11.8 14.5 11.8 12.4V4.6" fill="none" stroke="#fff" stroke-width="1.2"/><path d="M5.9 7.2v4.3M8.4 7.2v4.3" stroke="#fff" stroke-width="1.1"/></svg></div>
<svg class="abs" style="left:29.10px;top:656.75px" width="32" height="32" viewBox="0 0 32 32"><defs><clipPath id="cpwolf672"><circle cx="16" cy="16" r="15.5"/></clipPath></defs><circle cx="16" cy="16" r="15.5" fill="#f4f4f4"/><g clip-path="url(#cpwolf672)"><path d="M18.3 15.5Q20.5 12.3 22.8 12.5Q25.1 14 24.7 17.5Q24.2 20.8 21.5 22L18.3 21.5z" fill="#57514f"/>
<path d="M10.2 7L11.4 2.3 13.6 5.5H17L18.9 2.3 20.6 7Q22.3 8.6 21.9 10.2Q20.8 11.8 18.3 12.2V21.5L18.1 30H16.4L15.6 22.5H14.6L13.9 30H12.2L11.2 21.5 10.4 21.8 9.4 21.3 10.7 14V12.2Q8.4 11.6 8.6 9.8Q9 8.2 10.2 7z" fill="#67615f"/>
<circle cx="11.8" cy="11" r="1.1" fill="#e8876b"/><circle cx="18.9" cy="11" r="1.1" fill="#e8876b"/>
<path d="M12.5 8.6h1.4M16.6 8.6h1.4" stroke="#d9d4d2" stroke-width=".7"/></g><circle cx="16" cy="16" r="15.5" fill="none" stroke="#dde1e8" stroke-width="1"/></svg>
<div class="abs inp" style="left:98px;top:658.25px;width:260px;overflow:hidden"></div>
<div class="abs tt" style="left:109.20px;top:669px;font-size:13.00px;line-height:13.00px;font-weight:400;color:#444c59;white-space:nowrap;letter-spacing:-0.247px;max-width:236px;padding-bottom:4px;overflow:hidden">Post-Launch Promotion &amp; Analysis</div>
<div class="abs inp" style="left:387px;top:658.25px;width:260px"></div>
<div class="abs tt" style="left:398.80px;top:669px;font-size:13.00px;line-height:13.00px;font-weight:400;color:#444c59;white-space:nowrap;letter-spacing:-0.118px;">Wolf</div>
<div class="abs inp" style="left:676px;top:658.25px;width:132px"></div>
<div class="abs tt" style="left:689.40px;top:669px;font-size:13.20px;line-height:13.20px;font-weight:400;color:#444c59;white-space:nowrap;letter-spacing:0.115px;">01/31/2026</div>
<div class="abs" style="left:782.2px;top:668.45px"><svg width="12" height="12"><path d="M1.6 4.5V10.2Q1.6 11.1 2.5 11.1H9.3Q10.2 11.1 10.2 10.2V4.5" fill="none" stroke="#555" stroke-width="1.25"/><path d="M1 4.6V2.6Q1 1.9 1.7 1.9H1.9L2.7 0.3 3.5 1.9H8.3L9.1 0.3 9.9 1.9H10.1Q10.8 1.9 10.8 2.6V4.6z" fill="#111"/></svg></div>
<div class="abs inp" style="left:837px;top:658.25px;width:133px"></div>
<div class="abs tt" style="left:850.50px;top:669px;font-size:13.20px;line-height:13.20px;font-weight:400;color:#444c59;white-space:nowrap;letter-spacing:0.115px;">02/24/2026</div>
<div class="abs" style="left:943.7px;top:668.45px"><svg width="12" height="12"><path d="M1.6 4.5V10.2Q1.6 11.1 2.5 11.1H9.3Q10.2 11.1 10.2 10.2V4.5" fill="none" stroke="#555" stroke-width="1.25"/><path d="M1 4.6V2.6Q1 1.9 1.7 1.9H1.9L2.7 0.3 3.5 1.9H8.3L9.1 0.3 9.9 1.9H10.1Q10.8 1.9 10.8 2.6V4.6z" fill="#111"/></svg></div>
<div class="abs inp" style="left:999px;top:658.25px;width:86px"></div>
<div class="abs tt" style="left:1011.60px;top:669px;font-size:13.00px;line-height:13.00px;font-weight:400;color:#444c59;white-space:nowrap;">0</div>
<div class="abs del" style="left:1115px;top:658.25px"></div>
<div class="abs" style="left:1124px;top:666.75px"><svg width="15" height="16"><path d="M4.6 4.5V3.3Q4.6 1.8 6.1 1.8H8.1Q9.6 1.8 9.6 3.3V4.5M1 4.6H13.2M2.5 4.6V12.4Q2.5 14.5 4.6 14.5H9.7Q11.8 14.5 11.8 12.4V4.6" fill="none" stroke="#fff" stroke-width="1.2"/><path d="M5.9 7.2v4.3M8.4 7.2v4.3" stroke="#fff" stroke-width="1.1"/></svg></div>
<div class="abs card" style="left:14px;top:715px;width:1149px;height:100px"></div>
<div class="abs tt" style="left:29.20px;top:737px;font-size:16.00px;line-height:16.00px;font-weight:400;-webkit-text-stroke:0.4px #4343f2;color:#4343f2;white-space:nowrap;letter-spacing:-0.077px;">Live Preview</div>
<svg class="abs" style="left:0;top:735px" width="10" height="10"><path d="M0 1.5A8.5 8.5 0 0 0 8.5 10H0z" fill="#8a8a8a"/></svg>
<svg class="abs" style="left:1182px;top:735px" width="10" height="10"><path d="M10 1.5A8.5 8.5 0 0 1 1.5 10H10z" fill="#8a8a8a"/></svg>
</body></html>
